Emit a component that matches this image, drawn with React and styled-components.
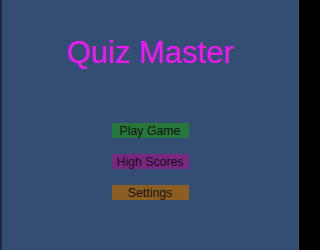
import styled, { createGlobalStyle } from 'styled-components';

const GlobalStyle = createGlobalStyle`
  html, body {
    margin: 0;
    padding: 0;
    background: #000;
  }
  body {
    font-family: "Liberation Sans", Arial, sans-serif;
  }
`;

const menuItems = [
  { label: 'Play Game', color: '#26783a' },
  { label: 'High Scores', color: '#7a2882' },
  { label: 'Settings', color: '#8c5e22' },
];

function App() {
  return (
    <>
      <GlobalStyle />
      <Screen>
        <Panel>
          <Title>Quiz Master</Title>
          <Menu>
            {menuItems.map(item => (
              <MenuButton key={item.label} $bg={item.color}>
                {item.label}
              </MenuButton>
            ))}
          </Menu>
        </Panel>
      </Screen>
    </>
  );
}

export default App;


const Screen = styled.div`
  display: flex;
  height: 100vh;
  background: #000;
`;

const Panel = styled.div`
  width: 299px;
  box-sizing: border-box;
  background: #334d73;
  border-left: 2px solid #1c2a40;
  border-right: 1px solid #42597e;
  display: flex;
  flex-direction: column;
  align-items: center;
`;

const Title = styled.h1`
  margin: 37px 0 0;
  font-size: 31px;
  line-height: 1;
  font-weight: normal;
  color: #f814f8;
`;

const Menu = styled.div`
  display: flex;
  flex-direction: column;
  gap: 16px;
  margin-top: 55px;
`;

const MenuButton = styled.div`
  width: 77px;
  height: 15px;
  display: flex;
  align-items: center;
  justify-content: center;
  background: ${props => props.$bg};
  color: #111;
  font-size: 12.3px;
  cursor: pointer;
`;
